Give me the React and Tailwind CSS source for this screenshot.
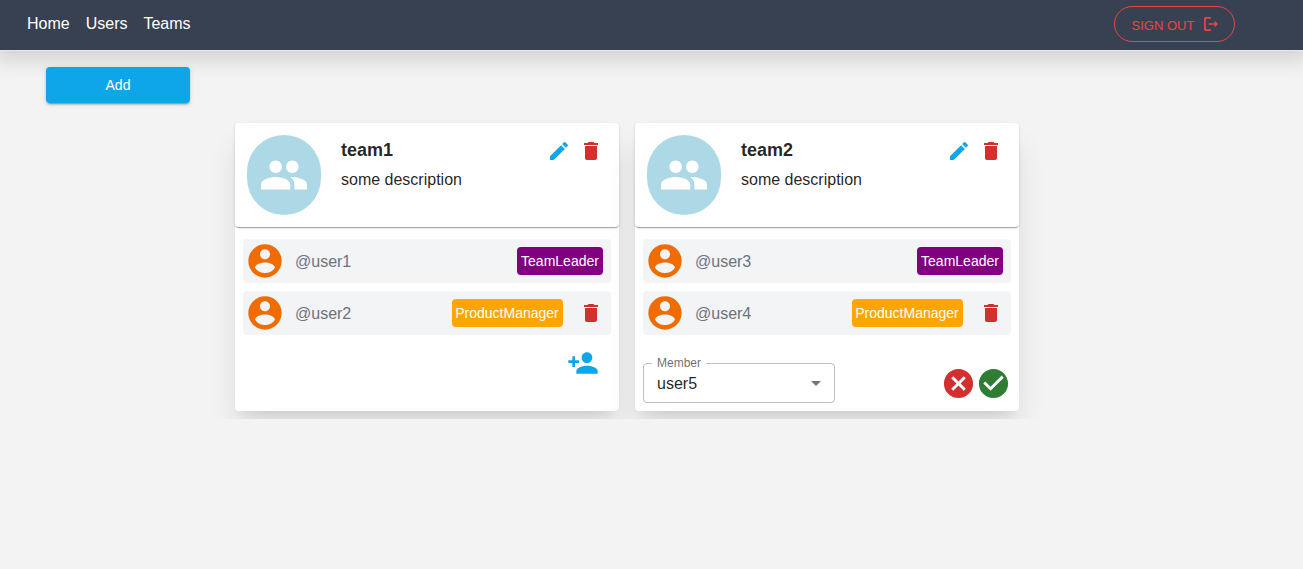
const ICONS = {
  people:
    "M16 11c1.66 0 2.99-1.34 2.99-3S17.66 5 16 5c-1.66 0-3 1.34-3 3s1.34 3 3 3zm-8 0c1.66 0 2.99-1.34 2.99-3S9.66 5 8 5C6.34 5 5 6.34 5 8s1.34 3 3 3zm0 2c-2.33 0-7 1.17-7 3.5V19h14v-2.5c0-2.33-4.67-3.5-7-3.5zm8 0c-.29 0-.62.02-.97.05 1.16.84 1.97 1.97 1.97 3.45V19h6v-2.5c0-2.33-4.67-3.5-7-3.5z",
  edit: "M3 17.25V21h3.75L17.81 9.94l-3.75-3.75L3 17.25zM20.71 7.04c.39-.39.39-1.02 0-1.41l-2.34-2.34a.9959.9959 0 0 0-1.41 0l-1.83 1.83 3.75 3.75 1.83-1.83z",
  trash: "M6 19c0 1.1.9 2 2 2h8c1.1 0 2-.9 2-2V7H6v12zM19 4h-3.5l-1-1h-5l-1 1H5v2h14V4z",
  account:
    "M12 2C6.48 2 2 6.48 2 12s4.48 10 10 10 10-4.48 10-10S17.52 2 12 2zm0 3c1.66 0 3 1.34 3 3s-1.34 3-3 3-3-1.34-3-3 1.34-3 3-3zm0 14.2c-2.5 0-4.71-1.28-6-3.22.03-1.99 4-3.08 6-3.08 1.99 0 5.97 1.09 6 3.08-1.29 1.94-3.5 3.22-6 3.22z",
  personAdd:
    "M15 12c2.21 0 4-1.79 4-4s-1.79-4-4-4-4 1.79-4 4 1.79 4 4 4zm-9-2V7H4v3H1v2h3v3h2v-3h3v-2H6zm9 4c-2.67 0-8 1.34-8 4v2h16v-2c0-2.66-5.33-4-8-4z",
  cancel:
    "M12 2C6.47 2 2 6.47 2 12s4.47 10 10 10 10-4.47 10-10S17.53 2 12 2zm5 13.59L15.59 17 12 13.41 8.41 17 7 15.59 10.59 12 7 8.41 8.41 7 12 10.59 15.59 7 17 8.41 13.41 12 17 15.59z",
  check:
    "M12 2C6.48 2 2 6.48 2 12s4.48 10 10 10 10-4.48 10-10S17.52 2 12 2zm-2 15l-5-5 1.41-1.41L10 14.17l7.59-7.59L19 8l-9 9z",
  logout:
    "M5.1 5.1H12V2.8H4.7c-1.1 0-1.9.8-1.9 1.9v14.6c0 1.1.8 1.9 1.9 1.9H12v-2.3H5.1V5.1zm16.4 6.9-4.7-4.2v3.1H9v2.2h7.8v3.1l4.7-4.2z",
  arrow: "M7 10l5 5 5-5z",
};

function Icon({ name, className }) {
  return (
    <svg viewBox="0 0 24 24" fill="currentColor" className={`shrink-0 ${className}`}>
      <path d={ICONS[name]} />
    </svg>
  );
}

const ROLE_COLORS = {
  TeamLeader: "bg-[#800080] w-[86px]",
  ProductManager: "bg-[#ffa500] w-[111px] pr-px",
};

function Member({ name, role, removable }) {
  return (
    <li className="flex h-11 items-center rounded bg-gray-100 pr-2 pl-[2px]">
      <Icon name="account" className="size-10 text-[#ef6c00]" />
      <span className="ml-2.5 flex-1 pt-0.5 text-[#6b7280]">{name}</span>
      <span className={`flex h-7 items-center justify-center rounded text-sm text-white ${ROLE_COLORS[role]}`}>
        {role}
      </span>
      {removable && <Icon name="trash" className="ml-4 size-6 text-[#d32f2f]" />}
    </li>
  );
}

function TeamCard({ name, members, children }) {
  return (
    <section className="h-72 w-96 rounded bg-white shadow-[0_20px_30px_-4px_rgba(0,0,0,0.11),0_8px_10px_-6px_rgba(0,0,0,0.08)]">
      <header className="flex h-26 rounded p-3 shadow-[0_2px_1px_-1px_rgba(0,0,0,0.2),0_1px_1px_0_rgba(0,0,0,0.14),0_1px_3px_0_rgba(0,0,0,0.12)]">
        <div className="flex h-20 w-[74px] items-center justify-center rounded-full bg-[#add8e6]">
          <Icon name="people" className="size-[50px] text-white" />
        </div>
        <div className="ml-5 flex-1">
          <h2 className="mt-px text-lg font-bold">{name}</h2>
          <p className="mt-1">some description</p>
        </div>
        <div className="mt-1 mr-1 flex gap-2">
          <Icon name="edit" className="size-6 text-[#0ea5e9]" />
          <Icon name="trash" className="size-6 text-[#d32f2f]" />
        </div>
      </header>
      <ul className="flex flex-col gap-2 px-2 pt-3">
        {members.map((m) => (
          <Member key={m.name} {...m} />
        ))}
      </ul>
      {children}
    </section>
  );
}

export default function App() {
  return (
    <div className="h-[569px] bg-[#f3f3f3] font-['Liberation_Sans',Arial,sans-serif] text-base text-black/87">
      <nav className="flex h-[51px] justify-between border-b border-gray-200 bg-[#384152] pr-[68px] pl-[27px] shadow-[0_2px_20px_6px_rgba(0,0,0,0.15)]">
        <div className="flex gap-4 pt-3 text-white">
          <a>Home</a>
          <a>Users</a>
          <a>Teams</a>
        </div>
        <button className="mt-1.5 flex h-9 w-[121px] items-center rounded-full border border-[#ef4444] pl-[16.5px] text-[13px] text-[#ef4444]">
          <span className="mt-[3px]">SIGN OUT</span>
          <Icon name="logout" className="ml-2 size-[18px]" />
        </button>
      </nav>
      <button className="mt-4 ml-[46px] flex h-9 w-36 items-center justify-center rounded bg-[#0ea5e9] text-sm text-white shadow-[0_3px_1px_-2px_rgba(0,0,0,0.2),0_2px_2px_0_rgba(0,0,0,0.14),0_1px_5px_0_rgba(0,0,0,0.12)]">
        Add
      </button>
      <main className="mt-3 flex gap-4 overflow-hidden pt-2 pb-2 pl-[235px]">
        <TeamCard
          name="team1"
          members={[
            { name: "@user1", role: "TeamLeader" },
            { name: "@user2", role: "ProductManager", removable: true },
          ]}
        >
          <div className="mt-3 flex justify-end pr-5">
            <Icon name="personAdd" className="size-8 text-[#0ea5e9]" />
          </div>
        </TeamCard>
        <TeamCard
          name="team2"
          members={[
            { name: "@user3", role: "TeamLeader" },
            { name: "@user4", role: "ProductManager", removable: true },
          ]}
        >
          <div className="mt-[23px] flex items-end px-2">
            <fieldset className="h-[45px] w-48 rounded border border-black/25 px-2">
              <legend className="h-[11px] px-[5px] text-xs leading-[11px] text-black/60">Member</legend>
              <div className="flex items-center justify-between pt-px pl-[5px]">
                <span className="pt-0.5">user5</span>
                <Icon name="arrow" className="-mr-[2px] size-6 text-black/54" />
              </div>
            </fieldset>
            <div className="mb-[2px] ml-auto flex">
              <Icon name="cancel" className="size-[35px] text-[#d32f2f]" />
              <Icon name="check" className="size-[35px] text-[#2e7d32]" />
            </div>
          </div>
        </TeamCard>
      </main>
    </div>
  );
}
